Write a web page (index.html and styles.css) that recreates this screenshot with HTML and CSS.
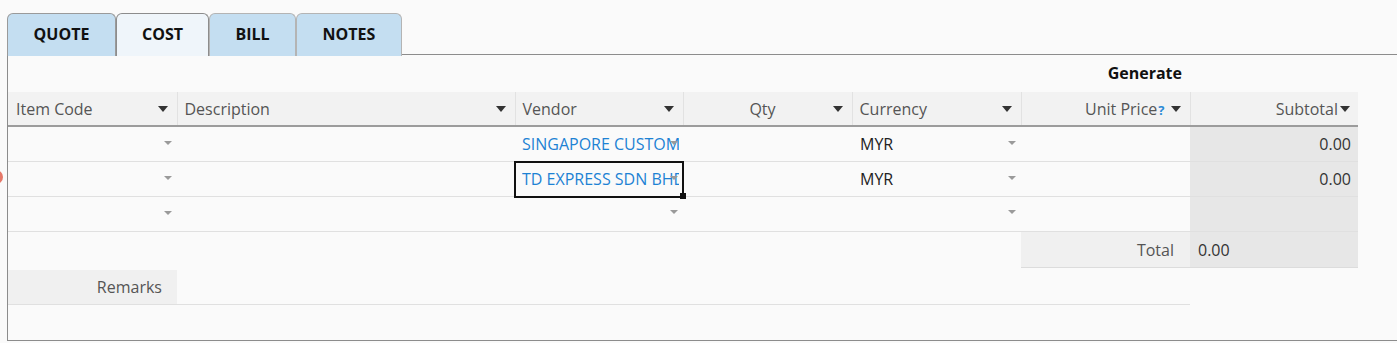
FILE: index.html
```html
<!DOCTYPE html>
<html lang="en">
<head>
<meta charset="UTF-8">
<meta name="viewport" content="width=device-width, initial-scale=1.0">
<title>Job Cost</title>
<link rel="stylesheet" href="styles.css">
</head>
<body>

<div class="tabs">
    <div class="tab tab-quote">QUOTE</div>
    <div class="tab tab-cost active">COST</div>
    <div class="tab tab-bill">BILL</div>
    <div class="tab tab-notes">NOTES</div>
</div>

<div class="panel">
    <div class="generate">Generate</div>

    <table class="grid">
        <colgroup>
            <col style="width:169px">
            <col style="width:338px">
            <col style="width:168px">
            <col style="width:169px">
            <col style="width:169px">
            <col style="width:169px">
            <col style="width:168px">
        </colgroup>
        <thead>
            <tr>
                <th class="first"><div class="head"><span class="label">Item Code</span><i class="caret"></i></div></th>
                <th><div class="head"><span class="label">Description</span><i class="caret"></i></div></th>
                <th><div class="head"><span class="label">Vendor</span><i class="caret"></i></div></th>
                <th><div class="head"><span class="label center">Qty</span><i class="caret"></i></div></th>
                <th><div class="head"><span class="label">Currency</span><i class="caret"></i></div></th>
                <th><div class="head right"><span>Unit Price<span class="help">?</span></span><i class="caret"></i></div></th>
                <th class="last"><div class="head right tight"><span>Subtotal</span><i class="caret"></i></div></th>
            </tr>
        </thead>
        <tbody>
            <tr>
                <td class="drop"><i class="arrow"></i></td>
                <td></td>
                <td class="drop vendor"><span class="text">SINGAPORE CUSTOMS</span><i class="arrow"></i></td>
                <td></td>
                <td class="drop currency"><span class="text">MYR</span><i class="arrow"></i></td>
                <td></td>
                <td class="sub">0.00</td>
            </tr>
            <tr>
                <td class="drop"><i class="arrow"></i></td>
                <td></td>
                <td class="drop vendor selected"><span class="text">TD EXPRESS SDN BHD</span><i class="arrow"></i><span class="handle"></span></td>
                <td></td>
                <td class="drop currency"><span class="text">MYR</span><i class="arrow"></i></td>
                <td></td>
                <td class="sub">0.00</td>
            </tr>
            <tr>
                <td class="drop"><i class="arrow"></i></td>
                <td></td>
                <td class="drop"><i class="arrow low"></i></td>
                <td></td>
                <td class="drop"><i class="arrow low"></i></td>
                <td></td>
                <td class="sub"></td>
            </tr>
            <tr class="total-row">
                <td></td>
                <td></td>
                <td></td>
                <td></td>
                <td></td>
                <td class="total-label">Total</td>
                <td class="total-value">0.00</td>
            </tr>
        </tbody>
    </table>

    <div class="remarks">
        <div class="remarks-label">Remarks</div>
        <div class="remarks-value"></div>
    </div>
</div>

<span class="error-dot"></span>

</body>
</html>
```

FILE: styles.css
```css
/* Page */
body {
    margin: 0;
    background: #fafafa;
    font-family: "Open Sans", Arial, sans-serif;
    font-size: 16px;
    color: #333;
    overflow: hidden;
}

/* Tabs */
.tabs {
    display: flex;
    padding: 13px 0 0 7px;
    margin-bottom: -2px;
    position: relative;
    z-index: 1;
}
.tab {
    box-sizing: border-box;
    height: 43px;
    display: flex;
    align-items: center;
    justify-content: center;
    background: #c4def1;
    border: 1px solid #b4b4b4;
    border-bottom: none;
    border-radius: 6px 6px 0 0;
    font-weight: bold;
    font-size: 16px;
    color: #111;
    padding-bottom: 2px;
}
.tab.active {
    background: #eff5fa;
    border-color: #8c8c8c;
}
.tab-quote { width: 109px; border-color: #9a9a9a; }
.tab-cost  { width: 93px; }
.tab-bill  { width: 87px; }
.tab-notes { width: 106px; }

/* Panel */
.panel {
    margin-left: 7px;
    width: 1420px;
    height: 285px;
    border-top: 1px solid #8c8c8c;
    border-left: 1px solid #8c8c8c;
    border-bottom: 1px solid #8c8c8c;
}
.generate {
    width: 1174px;
    height: 37px;
    line-height: 37px;
    text-align: right;
    font-weight: bold;
    color: #111;
}

/* Grid */
.grid {
    border-collapse: collapse;
    table-layout: fixed;
    width: 1350px;
}
.grid th {
    height: 33px;
    padding: 0;
    background: #f2f2f2;
    border-right: 1px solid #e2e2e2;
    border-bottom: 2px solid #9c9c9c;
    font-weight: normal;
    color: #555;
    text-align: left;
}
.grid th.last {
    border-right: none;
}
.head {
    display: flex;
    align-items: center;
    padding: 0 9px 0 7px;
}
.grid th.first .head {
    padding-left: 8px;
}
.head .label {
    flex: 1;
}
.head .label.center {
    text-align: center;
    padding-left: 2px;
}
.head.right {
    justify-content: flex-end;
}
.head.right .caret {
    margin-left: 6px;
}
.head.right.tight {
    padding-right: 8px;
}
.head.right.tight .caret {
    margin-left: 2px;
}
.help {
    color: #2a8ad6;
    font-size: 13px;
    font-weight: bold;
    margin-left: 1px;
}
.caret {
    width: 0;
    height: 0;
    border-left: 5px solid transparent;
    border-right: 5px solid transparent;
    border-top: 6px solid #333;
    margin-top: 1px;
}

.grid td {
    height: 34px;
    padding: 0 7px 0 7px;
    border-bottom: 1px solid #e0e0e0;
    white-space: nowrap;
    overflow: hidden;
    color: #222;
}
.grid td.drop {
    position: relative;
}
.grid td.currency {
    padding-left: 8px;
}
.grid td .text {
    display: block;
    overflow: hidden;
}
.grid td.vendor .text {
    color: #1d82d4;
    margin-right: -3px;
}
.arrow {
    position: absolute;
    right: 5px;
    top: 14px;
    width: 0;
    height: 0;
    border-left: 4px solid transparent;
    border-right: 4px solid transparent;
    border-top: 4px solid #9a9a9a;
}
.arrow.low {
    top: 13px;
}
.grid td.selected {
    overflow: visible;
    outline: 2px solid #111;
    outline-offset: -1px;
}
.handle {
    position: absolute;
    right: -3px;
    bottom: -3px;
    width: 6px;
    height: 6px;
    background: #111;
}
.grid td.sub {
    background: #e7e7e7;
    text-align: right;
    color: #333;
}

/* Total row */
.grid .total-row td {
    border-bottom: none;
    padding-top: 1px;
}
.grid .total-row td.total-label {
    background: #f0f0f0;
    text-align: right;
    padding-right: 16px;
    color: #555;
    border-bottom: 1px solid #dcdcdc;
}
.grid .total-row td.total-value {
    background: #e7e7e7;
    padding-left: 8px;
    color: #333;
    border-bottom: 1px solid #dcdcdc;
}

/* Remarks */
.remarks {
    display: flex;
    width: 1182px;
    margin-top: 2px;
    border-bottom: 1px solid #e0e0e0;
}
.remarks-label {
    width: 169px;
    height: 34px;
    line-height: 34px;
    box-sizing: border-box;
    padding-right: 15px;
    text-align: right;
    background: #f0f0f0;
    color: #555;
}
.remarks-value {
    flex: 1;
}

/* Validation marker on the left edge */
.error-dot {
    position: absolute;
    left: -11px;
    top: 170px;
    width: 14px;
    height: 14px;
    border-radius: 50%;
    background: #e2604f;
    opacity: 0.85;
}
```
